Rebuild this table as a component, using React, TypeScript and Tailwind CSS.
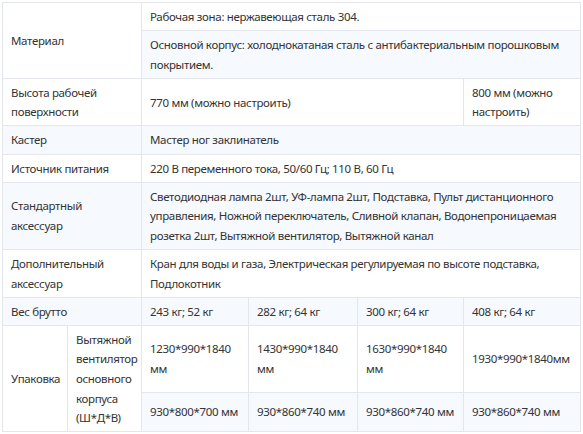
import React from "react";

const td = "border border-[#e3e6eb] pl-[8px] pr-[4px] pt-[4px] pb-[3.5px] align-middle whitespace-nowrap";
const stripe = "bg-[#f6f9fe]";

export default function App() {
  return (
    <div className="bg-white w-[583px] h-[434px] pt-[2px] pl-[2px]" style={{ fontFamily: '"Noto Sans", "Open Sans", sans-serif' }}>
      <table className="table-fixed border-collapse w-[578px] text-[11.5px] tracking-[-0.33px] leading-[19.6px] text-[#333]">
        <colgroup>
          <col className="w-[65px]" />
          <col className="w-[74px]" />
          <col className="w-[107px]" />
          <col className="w-[109px]" />
          <col className="w-[106px]" />
          <col className="w-[117px]" />
        </colgroup>
        <tbody>
          <tr>
            <td className={td} colSpan={2} rowSpan={2}>Материал</td>
            <td className={td} colSpan={4}>Рабочая зона: нержавеющая сталь 304.</td>
          </tr>
          <tr className={stripe}>
            <td className={td} colSpan={4}>
              Основной корпус: холоднокатаная сталь с антибактериальным порошковым
              <br />
              покрытием.
            </td>
          </tr>
          <tr>
            <td className={td} colSpan={2}>
              Высота рабочей
              <br />
              поверхности
            </td>
            <td className={td} colSpan={3}>770 мм (можно настроить)</td>
            <td className={td}>
              800 мм (можно
              <br />
              настроить)
            </td>
          </tr>
          <tr className={stripe}>
            <td className={td} colSpan={2}>Кастер</td>
            <td className={td} colSpan={4}>Мастер ног заклинатель</td>
          </tr>
          <tr>
            <td className={td} colSpan={2}>Источник питания</td>
            <td className={td} colSpan={4}>220 В переменного тока, 50/60 Гц; 110 В, 60 Гц</td>
          </tr>
          <tr className={stripe}>
            <td className={td} colSpan={2}>
              Стандартный
              <br />
              аксессуар
            </td>
            <td className={td} colSpan={4}>
              Светодиодная лампа 2шт, УФ-лампа 2шт, Подставка, Пульт дистанционного
              <br />
              управления, Ножной переключатель, Сливной клапан, Водонепроницаемая
              <br />
              розетка 2шт, Вытяжной вентилятор, Вытяжной канал
            </td>
          </tr>
          <tr>
            <td className={td} colSpan={2}>
              Дополнительный
              <br />
              аксессуар
            </td>
            <td className={td} colSpan={4}>
              Кран для воды и газа, Электрическая регулируемая по высоте подставка,
              <br />
              Подлокотник
            </td>
          </tr>
          <tr className={stripe}>
            <td className={td} colSpan={2}>Вес брутто</td>
            <td className={td}>243 кг; 52 кг</td>
            <td className={td}>282 кг; 64 кг</td>
            <td className={td}>300 кг; 64 кг</td>
            <td className={td}>408 кг; 64 кг</td>
          </tr>
          <tr>
            <td className={td} rowSpan={2}>Упаковка</td>
            <td className={td} rowSpan={2}>
              Вытяжной
              <br />
              вентилятор
              <br />
              основного
              <br />
              корпуса
              <br />
              (Ш*Д*В)
            </td>
            <td className={td}>
              1230*990*1840
              <br />
              мм
            </td>
            <td className={td}>
              1430*990*1840
              <br />
              мм
            </td>
            <td className={td}>
              1630*990*1840
              <br />
              мм
            </td>
            <td className={td}>1930*990*1840мм</td>
          </tr>
          <tr className={stripe}>
            <td className={td}>930*800*700 мм</td>
            <td className={td}>930*860*740 мм</td>
            <td className={td}>930*860*740 мм</td>
            <td className={td}>930*860*740 мм</td>
          </tr>
        </tbody>
      </table>
    </div>
  );
}
